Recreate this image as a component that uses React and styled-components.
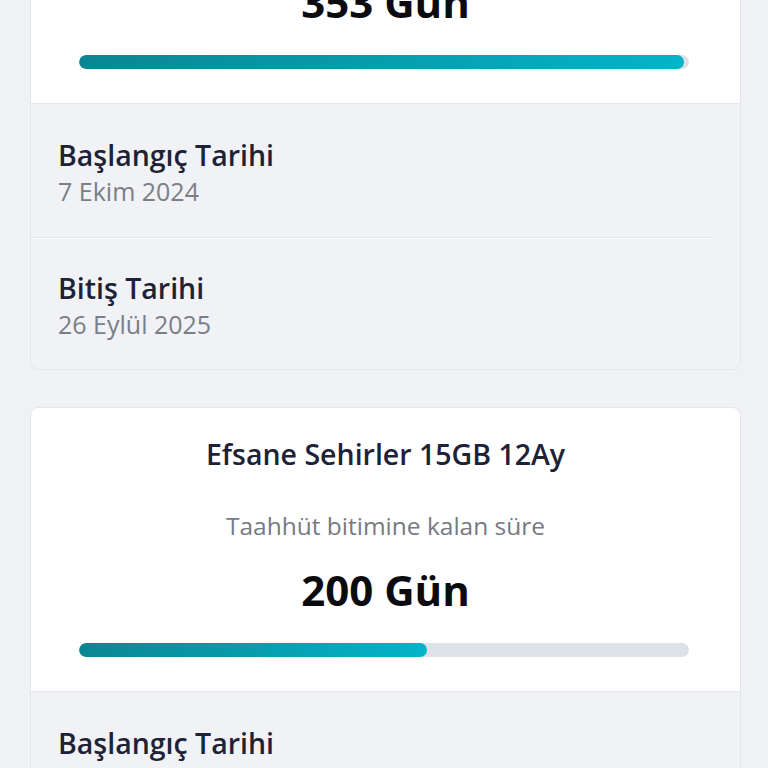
import React from "react";
import styled, { createGlobalStyle } from "styled-components";

const Global = createGlobalStyle`
  html, body { margin: 0; padding: 0; background: #eff1f5; }
  body { font-family: "Open Sans", "Noto Sans", sans-serif; overflow: hidden; }
`;

const Page = styled.div`
  padding: 0 27px 0 30px;
  margin-top: -181px;
  display: flex;
  flex-direction: column;
  gap: 37px;
`;

const Card = styled.section`
  background: #f0f2f6;
  border: 1px solid #e2e5ea;
  border-radius: 9px;
  overflow: hidden;
`;

const Top = styled.div`
  background: #ffffff;
  border-bottom: 1px solid #e4e6eb;
  padding: 29px 0 34px;
  display: flex;
  flex-direction: column;
  align-items: center;
`;

const Title = styled.h2`
  margin: 0;
  font-size: 28.5px;
  line-height: 34px;
  font-weight: 600;
  color: #1e2236;
`;

const Sub = styled.div`
  margin-top: 40px;
  font-size: 24.5px;
  line-height: 30px;
  color: #767a83;
`;

const Big = styled.div`
  margin-top: 24px;
  font-size: 42px;
  line-height: 50px;
  font-weight: 700;
  color: #0b0b0f;
`;

const Track = styled.div`
  margin-top: 28px;
  align-self: stretch;
  margin-left: 48px;
  margin-right: 51px;
  height: 14px;
  border-radius: 7px;
  background: #dde1e8;
  overflow: hidden;
`;

const Fill = styled.div`
  height: 100%;
  border-radius: 7px;
  background: linear-gradient(90deg, #0a8692 0%, #04b4c9 100%);
`;

const Row = styled.div`
  padding: ${(p) => (p.$last ? "33px 27px 29px" : "35px 27px 30px")};
`;

const Divider = styled.div`
  height: 1px;
  margin-right: 29px;
  background: #e2e5ea;
  border-bottom: 1px solid #fafbfc;
`;

const Label = styled.div`
  font-size: 28.5px;
  line-height: 32px;
  font-weight: 600;
  color: #1e2236;
`;

const Value = styled.div`
  margin-top: 4px;
  font-size: 25px;
  line-height: 32px;
  color: #7a7e86;
`;

const data = [
  {
    name: "Efsane Sehirler 15GB 12Ay",
    days: 353,
    pct: 99.2,
    start: "7 Ekim 2024",
    end: "26 Eylül 2025",
  },
  {
    name: "Efsane Sehirler 15GB 12Ay",
    days: 200,
    pct: 57.0,
    start: "7 Ekim 2024",
    end: "26 Eylül 2025",
  },
];

export default function App() {
  return (
    <>
      <Global />
      <Page>
        {data.map((d, i) => (
          <Card key={i}>
            <Top>
              <Title>{d.name}</Title>
              <Sub>Taahhüt bitimine kalan süre</Sub>
              <Big>{d.days} Gün</Big>
              <Track>
                <Fill style={{ width: `${d.pct}%` }} />
              </Track>
            </Top>
            <Row>
              <Label>Başlangıç Tarihi</Label>
              <Value>{d.start}</Value>
            </Row>
            <Divider />
            <Row $last>
              <Label>Bitiş Tarihi</Label>
              <Value>{d.end}</Value>
            </Row>
          </Card>
        ))}
      </Page>
    </>
  );
}
